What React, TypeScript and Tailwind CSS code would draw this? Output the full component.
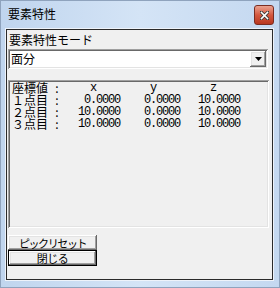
import React from "react";

const raised =
  "shadow-[inset_-1px_-1px_#696969,inset_1px_1px_#ffffff,inset_-2px_-2px_#a0a0a0,inset_2px_2px_#e3e3e3]";
const sunken =
  "shadow-[inset_1px_1px_#a0a0a0,inset_-1px_-1px_#ffffff,inset_2px_2px_#696969,inset_-2px_-2px_#e3e3e3]";

const rows = [
  { label: "１点目", v: ["0.0000", "0.0000", "10.0000"] },
  { label: "２点目", v: ["10.0000", "0.0000", "10.0000"] },
  { label: "３点目", v: ["10.0000", "0.0000", "10.0000"] },
];

export default function App() {
  return (
    <div className="w-[280px] h-[288px] flex flex-col bg-gradient-to-r from-[#c0d5ee] via-[#d4e4f6] to-[#c4d8f0] border border-[#8fa3bd] font-['Noto_Sans_CJK_JP'] text-black">
      {/* title bar */}
      <div className="h-[28px] flex items-start justify-between">
        <div className="mt-[5px] ml-[7px] text-[12px] leading-[16px]">要素特性</div>
        <div className="mt-[4px] mr-[5px] w-[20px] h-[20px] rounded-[3px] border border-[#7a2d22] bg-gradient-to-b from-[#e9a18f] via-[#d4583f] to-[#b8371f] flex items-center justify-center">
          <svg width="9" height="9" viewBox="0 0 9 9">
            <path d="M1 1 L8 8 M8 1 L1 8" stroke="#3a3a3a" strokeWidth="3.2" strokeLinecap="square" />
            <path d="M1.5 1.5 L7.5 7.5 M7.5 1.5 L1.5 7.5" stroke="#ffffff" strokeWidth="1.6" strokeLinecap="square" />
          </svg>
        </div>
      </div>
      {/* client */}
      <div className="ml-[5px] mr-[6px] mb-[7px] flex-1 border border-[#2a2a2a] shadow-[0_0_0_1px_#eef3fa] bg-[#f0f0f0] flex flex-col">
        <div className="mt-[3px] ml-[2px] text-[12px] leading-[14px]">要素特性モード</div>
        <div className={`mt-[2px] ml-[1px] w-[260px] h-[20px] bg-white flex items-center justify-between ${sunken}`}>
          <span className="ml-[3px] text-[12px] leading-[14px]">面分</span>
          <div className={`mr-[2px] w-[16px] h-[16px] bg-[#f0f0f0] flex items-center justify-center ${raised}`}>
            <svg width="7" height="4" viewBox="0 0 7 4">
              <path d="M0 0 H7 L3.5 4 Z" fill="#000" />
            </svg>
          </div>
        </div>
        <div className={`mt-[11px] ml-[1px] w-[261px] h-[148px] pt-[2px] pl-[3px] ${sunken}`}>
          <div className="flex h-[12px] items-center">
            <span className="w-[43px] pl-[1px] text-[12px] leading-[12px]">座標値</span>
            <span className="w-[6px] text-center text-[12px] leading-[12px]">:</span>
            {["x", "y", "z"].map((c) => (
              <span key={c} className="w-[60px] pr-[24px] text-right font-['Liberation_Mono'] text-[12px] tracking-[-1.2px] leading-[12px]">
                {c}
              </span>
            ))}
          </div>
          {rows.map((r) => (
            <div key={r.label} className="flex h-[12px] items-center">
              <span className="w-[43px] pl-[1px] text-[12px] leading-[12px]">{r.label}</span>
              <span className="w-[6px] text-center text-[12px] leading-[12px]">:</span>
              {r.v.map((v, i) => (
                <span key={i} className="w-[60px] text-right font-['Liberation_Mono'] text-[12px] tracking-[-1.2px] leading-[12px]">
                  {v}
                </span>
              ))}
            </div>
          ))}
        </div>
        <div className={`mt-[7px] ml-[1px] w-[89px] h-[15px] flex items-center justify-center text-[11px] leading-[12px] tracking-[-1.4px] ${raised}`}>
          ピックリセット
        </div>
        <div className="ml-[1px] w-[89px] h-[16px] border border-black">
          <div className={`w-full h-full flex items-center justify-center text-[11px] leading-[12px] tracking-[-0.5px] ${raised}`}>
            閉じる
          </div>
        </div>
      </div>
    </div>
  );
}
